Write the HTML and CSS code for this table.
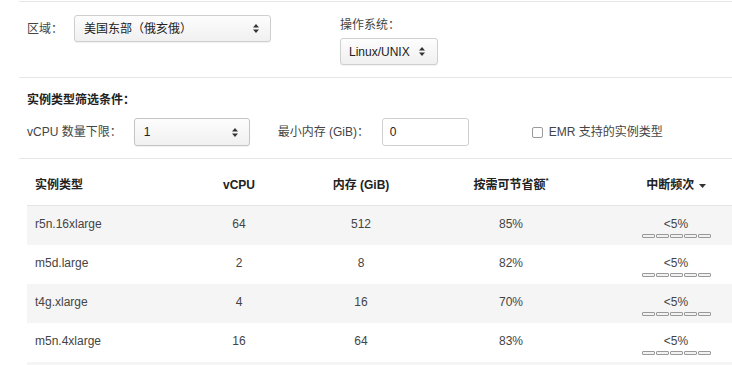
FILE: index.html
```html
<!DOCTYPE html>
<html lang="zh-CN">
<head>
<meta charset="utf-8">
<link rel="stylesheet" href="styles.css">
</head>
<body>
<div class="page">
  <section class="sec sec-top">
    <div class="field-inline">
      <span class="label region-label">区域：</span>
      <div class="select select-region">
        <span>美国东部（俄亥俄）</span>
        <svg class="arrows" width="6" height="9" viewBox="0 0 6 9"><path d="M3 0L6 3.5H0Z M3 9L6 5.5H0Z" fill="#333"/></svg>
      </div>
    </div>
    <div class="field-stack">
      <span class="label">操作系统：</span>
      <div class="select select-os">
        <span>Linux/UNIX</span>
        <svg class="arrows" width="6" height="9" viewBox="0 0 6 9"><path d="M3 0L6 3.5H0Z M3 9L6 5.5H0Z" fill="#333"/></svg>
      </div>
    </div>
  </section>
  <section class="sec sec-filter">
    <div class="filter-title">实例类型筛选条件：</div>
    <div class="filter-row">
      <span class="label vcpu-label">vCPU 数量下限：</span>
      <div class="select select-vcpu">
        <span>1</span>
        <svg class="arrows" width="6" height="9" viewBox="0 0 6 9"><path d="M3 0L6 3.5H0Z M3 9L6 5.5H0Z" fill="#333"/></svg>
      </div>
      <span class="label mem-label">最小内存 (GiB)：</span>
      <div class="input">0</div>
      <label class="check"><span class="box"></span>EMR 支持的实例类型</label>
    </div>
  </section>
  <div class="table">
    <div class="tr thead">
      <div class="td c1">实例类型</div>
      <div class="td c2">vCPU</div>
      <div class="td c3">内存 (GiB)</div>
      <div class="td c4">按需可节省额<sup>*</sup></div>
      <div class="td c5">中断频次 <svg width="7" height="4" viewBox="0 0 7 4" class="caret"><path d="M0 0H7L3.5 4Z" fill="#333"/></svg></div>
    </div>
    <div class="tr odd">
      <div class="td c1">r5n.16xlarge</div>
      <div class="td c2">64</div>
      <div class="td c3">512</div>
      <div class="td c4">85%</div>
      <div class="td c5"><div>&lt;5%</div><div class="bars"><i></i><i></i><i></i><i></i><i></i></div></div>
    </div>
    <div class="tr">
      <div class="td c1">m5d.large</div>
      <div class="td c2">2</div>
      <div class="td c3">8</div>
      <div class="td c4">82%</div>
      <div class="td c5"><div>&lt;5%</div><div class="bars"><i></i><i></i><i></i><i></i><i></i></div></div>
    </div>
    <div class="tr odd">
      <div class="td c1">t4g.xlarge</div>
      <div class="td c2">4</div>
      <div class="td c3">16</div>
      <div class="td c4">70%</div>
      <div class="td c5"><div>&lt;5%</div><div class="bars"><i></i><i></i><i></i><i></i><i></i></div></div>
    </div>
    <div class="tr">
      <div class="td c1">m5n.4xlarge</div>
      <div class="td c2">16</div>
      <div class="td c3">64</div>
      <div class="td c4">83%</div>
      <div class="td c5"><div>&lt;5%</div><div class="bars"><i></i><i></i><i></i><i></i><i></i></div></div>
    </div>
    <div class="tr odd tail"></div>
  </div>
</div>
</body>
</html>
```
FILE: styles.css
```css
html, body {
  margin: 0;
  padding: 0;
  background: #fff;
  overflow: hidden;
}
body {
  font-family: "Liberation Sans", "Noto Sans CJK SC", sans-serif;
  font-size: 12px;
  line-height: 16px;
  color: #444;
  width: 732px;
  height: 365px;
}
.page {
  padding-top: 1px;
  margin-left: 19px;
  height: 364px;
  overflow: hidden;
}
.sec {
  border-top: 1px solid #e6e6e6;
}
.sec-top {
  display: flex;
  align-items: flex-start;
  padding: 13px 0 12px 8px;
  height: 50px;
}
.field-inline {
  display: flex;
  align-items: center;
}
.region-label {
  width: 47px;
}
.field-stack {
  display: flex;
  flex-direction: column;
  align-items: flex-start;
  margin-left: 69px;
  padding-top: 2px;
}
.field-stack .label {
  margin-bottom: 5px;
}
.select {
  box-sizing: border-box;
  height: 27px;
  display: flex;
  align-items: center;
  justify-content: space-between;
  border: 1px solid #cfcfcf;
  border-radius: 3px;
  background: linear-gradient(#fdfdfd, #f0f0f0);
  box-shadow: 0 1px 1px rgba(0,0,0,0.06);
  color: #222;
}
.select-region {
  width: 197px;
  padding: 0 11px 0 9px;
}
.select-os {
  width: 98px;
  padding: 0 12px 0 8px;
}
.select-vcpu {
  width: 116px;
  height: 28px;
  padding: 0 11px 0 9px;
  border-color: #c4c4c4;
  margin-right: 28px;
}
.sec-filter {
  padding: 14px 0 12px 8px;
  border-bottom: 1px solid #e6e6e6;
}
.filter-title {
  font-weight: bold;
  color: #222;
  margin-bottom: 10px;
}
.filter-row {
  display: flex;
  align-items: center;
  height: 28px;
  white-space: nowrap;
}
.vcpu-label {
  margin-right: 12px;
}
.mem-label {
  width: 104px;
  flex: none;
}
.input {
  box-sizing: border-box;
  width: 87px;
  height: 28px;
  border: 1px solid #cfcfcf;
  border-radius: 3px;
  padding: 5px 7px;
  color: #222;
  background: #fff;
  flex: none;
}
.check {
  display: flex;
  align-items: center;
  margin-left: 63px;
  color: #444;
}
.box {
  box-sizing: border-box;
  width: 11px;
  height: 11px;
  border: 1px solid #9a9a9a;
  border-radius: 2px;
  margin-right: 6px;
  background: #fff;
}
.table {
  margin-left: 8px;
}
.tr {
  display: grid;
  grid-template-columns: 152px 120px 124px 176px 1fr;
  height: 39px;
}
.tr.odd {
  background: #f5f5f5;
}
.tr.tail {
  height: 3px;
}
.thead {
  height: 46px;
  border-bottom: 1px solid #e4e4e4;
  align-items: center;
  font-weight: bold;
  color: #222;
}
.td {
  text-align: center;
  padding-top: 10px;
}
.thead .td {
  padding-top: 6px;
}
.td.c1 {
  text-align: left;
  padding-left: 8px;
}
.td.c5 {
  padding-left: 21px;
  width: 112px;
}
sup {
  font-size: 8px;
  line-height: 0;
  vertical-align: 6px;
}
.caret {
  vertical-align: middle;
  margin-left: 1px;
}
.bars {
  display: flex;
  justify-content: center;
  gap: 1px;
  margin-top: 2px;
}
.bars i {
  box-sizing: border-box;
  width: 13px;
  height: 4px;
  border: 1px solid #999;
  border-radius: 1px;
  background: #f2f2f2;
}
```
